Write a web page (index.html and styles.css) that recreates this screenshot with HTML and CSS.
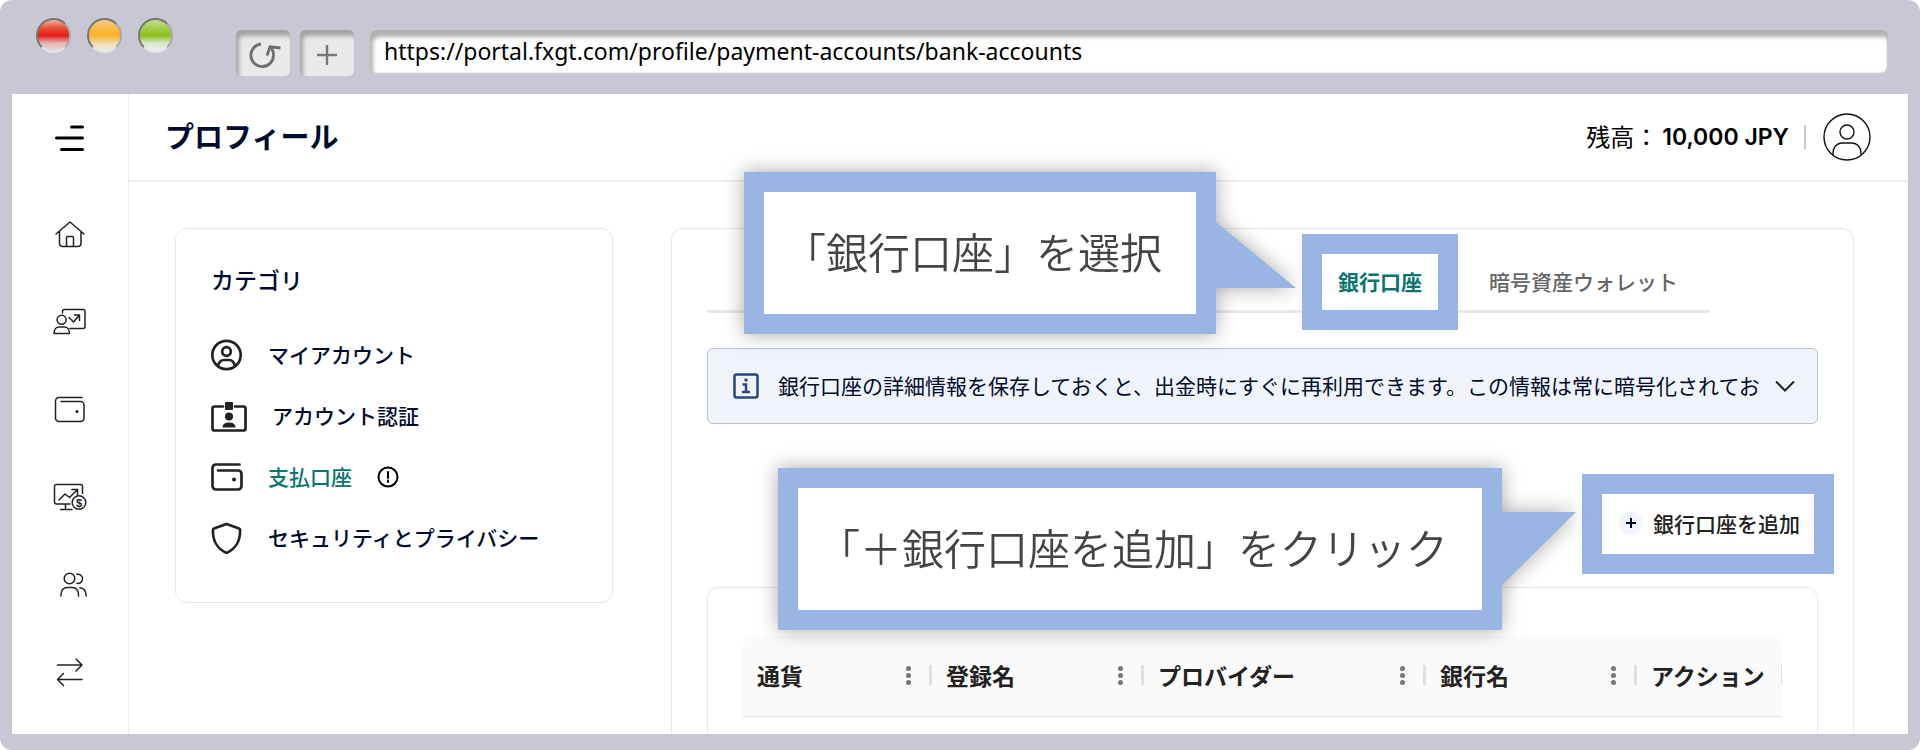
FILE: index.html
```html
<!DOCTYPE html>
<html lang="ja">
  <head>
    <meta charset="UTF-8" />
    <meta name="viewport" content="width=device-width, initial-scale=1.0" />
    <title>プロフィール - 銀行口座</title>
    <link rel="stylesheet" href="styles.css">
  </head>
  <body>
    <div class="browser">
      <div class="toolbar">
        <div class="lights">
          <span class="light red"></span>
          <span class="light yellow"></span>
          <span class="light green"></span>
        </div>
        <div class="tool-buttons">
          <button class="tool-btn" type="button" aria-label="再読み込み">
            <svg width="36" height="32" viewBox="0 0 36 32" fill="none" stroke="#6e6e6e" stroke-width="2.800">
              <path d="M16 5a11.300 11.300 0 1 0 12.500 11c0-3-1-6-3.500-8" />
              <path d="M35.500 9L25 7.800 22 16.500" />
            </svg>
          </button>
          <button class="tool-btn" type="button" aria-label="新しいタブ">
            <svg width="36" height="32" viewBox="0 0 36 32" fill="none" stroke="#777" stroke-width="2.400">
              <path d="M18 6V26M8 16H28" />
            </svg>
          </button>
        </div>
        <input class="url" type="text" aria-label="URL" value="https://portal.fxgt.com/profile/payment-accounts/bank-accounts" />
      </div>

      <div class="app">
        <nav class="sidebar">
          <button class="burger" type="button" aria-label="メニュー">
            <svg width="36" height="32" viewBox="0 0 36 32" fill="none" stroke="#000" stroke-width="3" stroke-linecap="round">
              <path d="M19.500 5H30.500M4.500 16H30.500M9.500 27.500H30.500" />
            </svg>
          </button>
          <a href="#" aria-label="ホーム">
            <svg viewBox="0 0 36 32">
              <path d="M4 17L18 5 32 17M7.500 15V26.500a3 3 0 0 0 3 3H26a3 3 0 0 0 3-3V15M14.500 29.500V20.500a1 1 0 0 1 1-1h5a1 1 0 0 1 1 1V29.500" />
            </svg>
          </a>
          <a href="#" aria-label="取引口座">
            <svg viewBox="0 0 36 32">
              <path d="M10.500 8V6.500a2 2 0 0 1 2-2H31a2 2 0 0 1 2 2V21.500a2 2 0 0 1-2 2H18M17 12.500l4.500 4.500 6-7M22.500 10H27.500V15.500" />
              <circle cx="9.600" cy="14.800" r="4.500" />
              <path d="M2 28.500c0-4.500 2.500-6.500 5-6.500h5.500c2.500 0 5 2 5 6.500z" />
            </svg>
          </a>
          <a href="#" aria-label="ウォレット">
            <svg viewBox="0 0 36 32">
              <path d="M30 4.500H7a3.500 3.500 0 0 0-3.500 3.500V25a3.500 3.500 0 0 0 3.500 3.500H28.500A3.500 3.500 0 0 0 32 25V12a3.500 3.500 0 0 0-3.500-3.500H9" />
              <circle class="dot" cx="25" cy="18.500" r="1.500" />
            </svg>
          </a>
          <a href="#" aria-label="取引">
            <svg viewBox="0 0 36 32">
              <path d="M30.500 12.500V5.500a2 2 0 0 0-2-2H4.500a2 2 0 0 0-2 2V21a2 2 0 0 0 2 2H18M13.500 23V28M8.500 28.500H20M7 19l6-6 4.500 3.500 8-8M20 8.500H25.500V14" />
              <circle cx="27" cy="21.500" r="6.800" />
              <text class="coin" x="27" y="25.500">$</text>
            </svg>
          </a>
          <a href="#" aria-label="紹介">
            <svg viewBox="0 0 36 32">
              <circle cx="17.500" cy="9.500" r="5.300" />
              <path d="M9 27v-1.500c0-4 2.500-7 6-7h5.500c3.500 0 6 3 6 7V27M25 5.300a4.600 4.600 0 1 1 0 9M28 18.800c4 .7 6.200 4 6.200 8.200" />
            </svg>
          </a>
          <a href="#" aria-label="振替">
            <svg viewBox="0 0 36 32">
              <path d="M5.500 8H30M24 2l6 6-6 6M30 22.500H5.500M11.500 16.500l-6 6 6 6" />
            </svg>
          </a>
        </nav>

        <div class="main">
          <header class="header">
            <h1>プロフィール</h1>
            <div class="account">
              <span>残高：</span>
              <strong>10,000 JPY</strong>
              <button class="avatar" type="button" aria-label="アカウント">
                <svg width="48" height="48" viewBox="0 0 48 48" fill="none" stroke="#111" stroke-width="1.400">
                  <circle cx="24" cy="24" r="23" />
                  <circle cx="24" cy="19" r="7" />
                  <path d="M10 42V40c0-6 4-10 9-10h10c5 0 9 4 9 10v2" />
                </svg>
              </button>
            </div>
          </header>

          <div class="content">
            <section class="category">
              <h2>カテゴリ</h2>
              <ul>
                <li>
                  <svg width="32" height="32" viewBox="0 0 32 32">
                    <circle cx="15.500" cy="16" r="14.200" />
                    <circle cx="15.500" cy="12.500" r="4.300" />
                    <path d="M7 27c1-4.500 4-6 6-6h5c2 0 5 1.500 6 6" />
                  </svg>
                  <a href="#">マイアカウント</a>
                </li>
                <li>
                  <svg width="36" height="32" viewBox="0 0 36 32">
                    <path d="M12 6.500H3.500a2 2 0 0 0-2 2V28.500a2 2 0 0 0 2 2H32.500a2 2 0 0 0 2-2V8.500a2 2 0 0 0-2-2H24" />
                    <rect class="fill" x="14" y="2" width="8" height="8" rx="1" />
                    <circle class="fill" cx="18" cy="16.500" r="4" />
                    <path class="fill" d="M11.500 27.500c0-4 3.500-5 6.500-5s6.500 1 6.500 5z" />
                  </svg>
                  <a href="#">アカウント認証</a>
                </li>
                <li class="active">
                  <svg width="32" height="32" viewBox="0 0 32 32">
                    <path d="M28.500 3.500H5A3.500 3.500 0 0 0 1.500 7V25a3.500 3.500 0 0 0 3.500 3.500H27A3.500 3.500 0 0 0 30.500 25V13a3.500 3.500 0 0 0-3.500-3.500H7" />
                    <circle class="fill" cx="23" cy="18.500" r="2" />
                  </svg>
                  <a href="#">支払口座</a>
                  <svg class="alert-mark" width="22" height="22" viewBox="0 0 22 22">
                    <circle cx="11" cy="11" r="9.500" />
                    <path d="M11 6V12M11 14.500V16" />
                  </svg>
                </li>
                <li>
                  <svg width="32" height="32" viewBox="0 0 32 32">
                    <path d="M15.500 2L28 6.500a1.500 1.500 0 0 1 1 1.500C29.500 18.500 24.500 27 15.500 31 6.500 27 1.500 18.500 2 8A1.500 1.500 0 0 1 3 6.500z" />
                  </svg>
                  <a href="#">セキュリティとプライバシー</a>
                </li>
              </ul>
            </section>

            <section class="panel">
              <div class="tabs">
                <div class="guide">
                  <div class="bubble bubble-tab">「銀行口座」を選択</div>
                  <button class="tab marked" type="button">銀行口座</button>
                </div>
                <button class="tab" type="button">暗号資産ウォレット</button>
              </div>

              <div class="notice">
                <svg width="26" height="26" viewBox="0 0 26 26" fill="none" stroke="#28477b" stroke-width="2.500">
                  <rect x="1.500" y="1.500" width="23" height="23" rx="2" />
                  <path d="M9.500 11.500H13V18.500M9 19H17" />
                  <circle cx="13" cy="7" r="1.700" fill="#28477b" stroke="none" />
                </svg>
                <p>銀行口座の詳細情報を保存しておくと、出金時にすぐに再利用できます。この情報は常に暗号化されてお</p>
                <button class="expand" type="button" aria-label="開く">
                  <svg width="20" height="12" viewBox="0 0 20 12" fill="none" stroke="#222" stroke-width="2">
                    <path d="M1 1.500L10 10.500 19 1.500" />
                  </svg>
                </button>
              </div>

              <div class="actions">
                <div class="guide">
                  <div class="bubble bubble-add">「＋銀行口座を追加」をクリック</div>
                  <button class="add marked" type="button">
                    <svg width="24" height="24" viewBox="0 0 24 24">
                      <circle cx="12" cy="12" r="12" fill="#f2f5fe" />
                      <path d="M12 7V17M7 12H17" stroke="#000c2c" stroke-width="2" />
                    </svg>
                    銀行口座を追加
                  </button>
                </div>
              </div>

              <div class="table-card">
                <table>
                  <thead>
                    <tr>
                      <th class="col-currency"><div>通貨<i class="dots"></i></div></th>
                      <th class="col-name"><div>登録名<i class="dots"></i></div></th>
                      <th class="col-provider"><div>プロバイダー<i class="dots"></i></div></th>
                      <th class="col-bank"><div>銀行名<i class="dots"></i></div></th>
                      <th><div>アクション</div></th>
                    </tr>
                  </thead>
                </table>
              </div>
            </section>
          </div>
        </div>
      </div>
    </div>
  </body>
</html>
```

FILE: styles.css
```css
* {
  box-sizing: border-box;
}

body {
  margin: 0;
  background-color: #fff;
  color: #000c2c;
  font-family: "Noto Sans CJK JP", sans-serif;
  font-size: 21px;
}

h1,
h2,
p,
ul {
  margin: 0;
  padding: 0;
}

button {
  padding: 0;
  border: none;
  background: none;
  color: inherit;
  font: inherit;
  cursor: pointer;
}

a {
  color: inherit;
  text-decoration: none;
}

svg {
  display: block;
  flex-shrink: 0;
}

/* browser frame */
.browser {
  display: flex;
  flex-direction: column;
  height: 100vh;
  padding: 0 12px 16px;
  background-color: #c8c7d3;
  border-radius: 12px;
  overflow: hidden;
}

.toolbar {
  display: flex;
  align-items: flex-start;
  height: 94px;
  padding: 30px 20px 0 24px;
}

.lights {
  display: flex;
  gap: 16px;
  margin: -12px 63px 0 0;
}

.light {
  width: 35px;
  height: 35px;
  border: 2px solid #777;
  border-right-color: #aaa;
  border-bottom-color: #e4e4e4;
  border-radius: 50%;
}

.red {
  background: linear-gradient(#eeb0a8, #e4553a 25%, #e61919 50%, #e9b5b5 75%, #e6dada);
}

.yellow {
  background: linear-gradient(#f2c98a, #f8ba45 30%, #f9b32c 50%, #f3d9a8 75%, #eee);
}

.green {
  background: linear-gradient(#c4dc9c, #9fcc44 30%, #8dc21f 50%, #d9e8c6 75%, #eee);
}

.tool-buttons {
  display: flex;
  gap: 10px;
  margin-right: 16px;
}

.tool-btn {
  display: flex;
  align-items: center;
  justify-content: center;
  width: 54px;
  height: 46px;
  padding-top: 4px;
  background-color: #e9e9e9;
  border-radius: 5px;
  box-shadow: inset 3px 6px 4px #a4a4a4;
}

.url {
  flex: 1;
  min-width: 0;
  height: 44px;
  padding: 0 15px 2px 14px;
  border: none;
  border-radius: 6px;
  background-color: #fff;
  box-shadow: inset 3px 7px 4px #b0b0b0, inset -1px -1px 2px #bbb;
  color: #000;
  font-family: "Noto Sans", sans-serif;
  font-size: 23px;
}

/* app */
.app {
  display: flex;
  flex: 1;
  min-height: 0;
  background-color: #fff;
  overflow: hidden;
}

.sidebar {
  display: flex;
  flex-direction: column;
  flex-shrink: 0;
  align-items: center;
  gap: 56px;
  width: 117px;
  padding-top: 28px;
  border-right: 1px solid #ececec;
}

.sidebar svg {
  width: 36px;
  height: 32px;
}

.sidebar a svg {
  fill: none;
  stroke: #222;
  stroke-width: 1.5;
  stroke-linecap: round;
  stroke-linejoin: round;
}

.burger {
  margin-bottom: 7px;
}

.sidebar .dot {
  fill: #222;
  stroke: none;
}

.sidebar .coin {
  fill: #222;
  stroke: none;
  font-family: "Liberation Sans", sans-serif;
  font-size: 11px;
  font-weight: bold;
  text-anchor: middle;
}

.main {
  display: flex;
  flex: 1;
  flex-direction: column;
  min-width: 0;
}

.header {
  display: flex;
  flex-shrink: 0;
  align-items: center;
  justify-content: space-between;
  height: 88px;
  padding: 0 37px 0 36px;
  border-bottom: 2px solid #efefef;
}

.header h1 {
  padding-bottom: 4px;
  font-size: 29px;
  font-weight: bold;
  line-height: 40px;
}

.account {
  display: flex;
  align-items: center;
  color: #000;
  font-size: 24px;
}

.account span {
  padding: 0 4px 4px 0;
}

.account strong {
  padding-right: 15px;
  border-right: 2px solid #ccc;
  font-family: Inter, sans-serif;
  font-size: 23px;
  font-weight: 600;
  line-height: 24px;
}

.avatar {
  margin-left: 17px;
}

.content {
  display: flex;
  flex: 1;
  gap: 58px;
  min-height: 0;
  padding: 46px 54px 0 46px;
}

/* category menu */
.category {
  flex-shrink: 0;
  align-self: flex-start;
  width: 438px;
  padding: 32px 35px 48px;
  border: 1px solid #e8e8e8;
  border-radius: 12px;
}

.category h2 {
  margin-bottom: 42px;
  font-size: 23px;
  font-weight: 500;
  line-height: 36px;
}

.category ul {
  display: flex;
  flex-direction: column;
  gap: 29px;
  list-style: none;
}

.category li {
  display: flex;
  align-items: center;
  gap: 25px;
  height: 32px;
  font-weight: 500;
}

.category a {
  padding-bottom: 2px;
}

.category svg {
  fill: none;
  stroke: #222;
  stroke-width: 2.7;
  stroke-linecap: round;
  stroke-linejoin: round;
}

.category .fill {
  fill: #222;
  stroke: none;
}

.category .active {
  color: #0b7470;
}

.category .alert-mark {
  stroke: #000;
  stroke-width: 2;
}

/* payment accounts */
.panel {
  flex: 1;
  min-width: 0;
  padding: 25px 35px 0;
  border: 1px solid #e8e8e8;
  border-bottom: none;
  border-radius: 12px 12px 0 0;
}

.tabs {
  display: flex;
  justify-content: flex-end;
  margin-right: 108px;
  border-bottom: 3px solid #e8e8e8;
}

.tab {
  height: 56px;
  padding: 0 32px 2px 51px;
  color: #666;
  font-weight: 500;
}

.guide {
  position: relative;
}

.marked {
  position: relative;
  background-color: #fff;
  box-shadow: 0 0 0 20px #9ab4e4;
}

.tab.marked {
  padding: 0 16px 2px;
  color: #0b7470;
  font-weight: bold;
}

.bubble {
  position: absolute;
  z-index: 1;
  padding: 28px 34px 32px 20px;
  border: 20px solid #9ab4e4;
  background-color: #fff;
  color: #444;
  filter: drop-shadow(0 0 10px rgba(0, 0, 0, 0.35));
  font-size: 42px;
  font-weight: 350;
  line-height: 62px;
  white-space: nowrap;
}

.bubble::after {
  content: "";
  position: absolute;
  left: calc(100% + 20px);
  background-color: #9ab4e4;
}

.bubble-tab {
  top: -82px;
  right: calc(100% + 106px);
}

.bubble-tab::after {
  top: 30px;
  width: 80px;
  height: 66px;
  clip-path: polygon(0 0, 100% 100%, 0 100%);
}

.bubble-add {
  top: -26px;
  right: calc(100% + 100px);
}

.bubble-add::after {
  top: 24px;
  width: 74px;
  height: 73px;
  clip-path: polygon(0 0, 100% 0, 0 100%);
}

.notice {
  display: flex;
  align-items: center;
  height: 76px;
  margin-top: 35px;
  padding: 0 12px 0 25px;
  border: 1px solid #b4c1d4;
  border-radius: 6px;
  background-color: #f0f3f9;
}

.notice p {
  flex: 1;
  min-width: 0;
  margin-left: 19px;
  padding-bottom: 2px;
  overflow: hidden;
  white-space: nowrap;
}

.expand {
  padding: 10px;
}

.actions {
  display: flex;
  justify-content: flex-end;
  margin: 70px 4px 33px 0;
}

.add {
  display: flex;
  align-items: center;
  gap: 10px;
  height: 60px;
  padding: 0 14px 2px 17px;
  color: #222;
  font-weight: 500;
}

.table-card {
  height: 300px;
  padding: 48px 35px 0;
  border: 1px solid #e8e8e8;
  border-radius: 12px;
}

table {
  width: 100%;
  border-collapse: separate;
  border-spacing: 0;
  table-layout: fixed;
}

th {
  height: 81px;
  padding: 0 0 2px;
  border-bottom: 1px solid #e0e0e0;
  background-color: #fafafa;
  color: #222;
  font-size: 23px;
  font-weight: bold;
  text-align: left;
}

th:first-child {
  border-top-left-radius: 12px;
}

th:last-child {
  border-top-right-radius: 12px;
}

th div {
  display: flex;
  align-items: center;
  justify-content: space-between;
  height: 20px;
  padding: 0 18px 0 14px;
  border-right: 3px solid #e0e0e0;
  line-height: 20px;
}

th:last-child div {
  padding-right: 0;
  border-right-width: 1px;
}

.col-currency {
  width: 189px;
}

.col-name {
  width: 212px;
}

.col-provider {
  width: 282px;
}

.col-bank {
  width: 211px;
}

/* three dots, the outer two are shadows of the middle one */
.dots {
  width: 5px;
  height: 5px;
  border-radius: 50%;
  background-color: #777;
  box-shadow: 0 -7px #777, 0 7px #777;
}
```
